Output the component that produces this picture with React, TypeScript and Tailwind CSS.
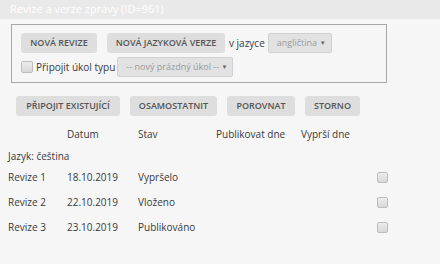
import React from "react";

const Btn = ({ children, w }: { children: React.ReactNode; w: string }) => (
  <button
    className={`h-[20px] ${w} rounded-[3px] bg-[#dedede] text-[9px] font-semibold text-[#555] flex items-center justify-center whitespace-nowrap`}
  >
    {children}
  </button>
);

const Sel = ({ children, w }: { children: React.ReactNode; w: string }) => (
  <div
    className={`h-[20px] ${w} rounded-[2px] border border-[#d0d0d0] bg-[#e2e2e2] text-[9px] text-[#999] flex items-center justify-between pl-[8px] pr-[5px] whitespace-nowrap`}
  >
    <span>{children}</span>
    <span className="text-[6px] text-[#666]">▼</span>
  </div>
);

const Check = ({ s }: { s: string }) => (
  <div className={`${s} rounded-[2px] border border-[#bdbdbd] bg-gradient-to-b from-[#ededed] to-[#d8d8d8]`} />
);

export default function App() {
  const rows = [
    ["Revize 1", "18.10.2019", "Vypršelo"],
    ["Revize 2", "22.10.2019", "Vloženo"],
    ["Revize 3", "23.10.2019", "Publikováno"],
  ];
  return (
    <div
      className="w-[440px] h-[264px] bg-[#f6f6f6] text-[#3a3a3a] overflow-hidden"
      style={{ fontFamily: '"Open Sans", sans-serif' }}
    >
      <div className="h-[19px] bg-[#e9e9e9] pl-[10px] flex items-center text-[11px] text-white">
        Revize a verze zprávy (ID=961)
      </div>
      <div className="ml-[11px] mt-[5px] w-[376px] h-[59px] border border-[#a8a8a8] pl-[9px] pt-[8px]">
        <div className="flex items-center">
          <Btn w="w-[76px]">NOVÁ REVIZE</Btn>
          <div className="w-[10px]" />
          <Btn w="w-[118px]">NOVÁ JAZYKOVÁ VERZE</Btn>
          <span className="ml-[4px] text-[10px]">v jazyce</span>
          <div className="ml-[3px]">
            <Sel w="w-[64px]">angličtina</Sel>
          </div>
        </div>
        <div className="flex items-center mt-[4px]">
          <Check s="w-[12px] h-[12px]" />
          <span className="ml-[3px] text-[10px]">Připojit úkol typu</span>
          <div className="ml-[2px]">
            <Sel w="w-[116px]">-- nový prázdný úkol --</Sel>
          </div>
        </div>
      </div>
      <div className="flex items-center gap-[10px] ml-[16px] mt-[13px]">
        <Btn w="w-[104px]">PŘIPOJIT EXISTUJÍCÍ</Btn>
        <Btn w="w-[87px]">OSAMOSTATNIT</Btn>
        <Btn w="w-[68px]">POROVNAT</Btn>
        <Btn w="w-[55px]">STORNO</Btn>
      </div>
      <div className="pl-[8px] mt-[9px] text-[10px]">
        <div className="grid grid-cols-[59px_71px_78px_85px_76px_auto] h-[18px] items-center">
          <span />
          <span>Datum</span>
          <span>Stav</span>
          <span>Publikovat dne</span>
          <span>Vyprší dne</span>
          <span />
        </div>
        <div className="h-[18px] flex items-center mt-[4px]">Jazyk: čeština</div>
        {rows.map((r) => (
          <div
            key={r[0]}
            className="grid grid-cols-[59px_71px_78px_85px_76px_auto] h-[25px] items-center"
          >
            <span>{r[0]}</span>
            <span>{r[1]}</span>
            <span>{r[2]}</span>
            <span />
            <span />
            <Check s="w-[11px] h-[11px]" />
          </div>
        ))}
      </div>
    </div>
  );
}
